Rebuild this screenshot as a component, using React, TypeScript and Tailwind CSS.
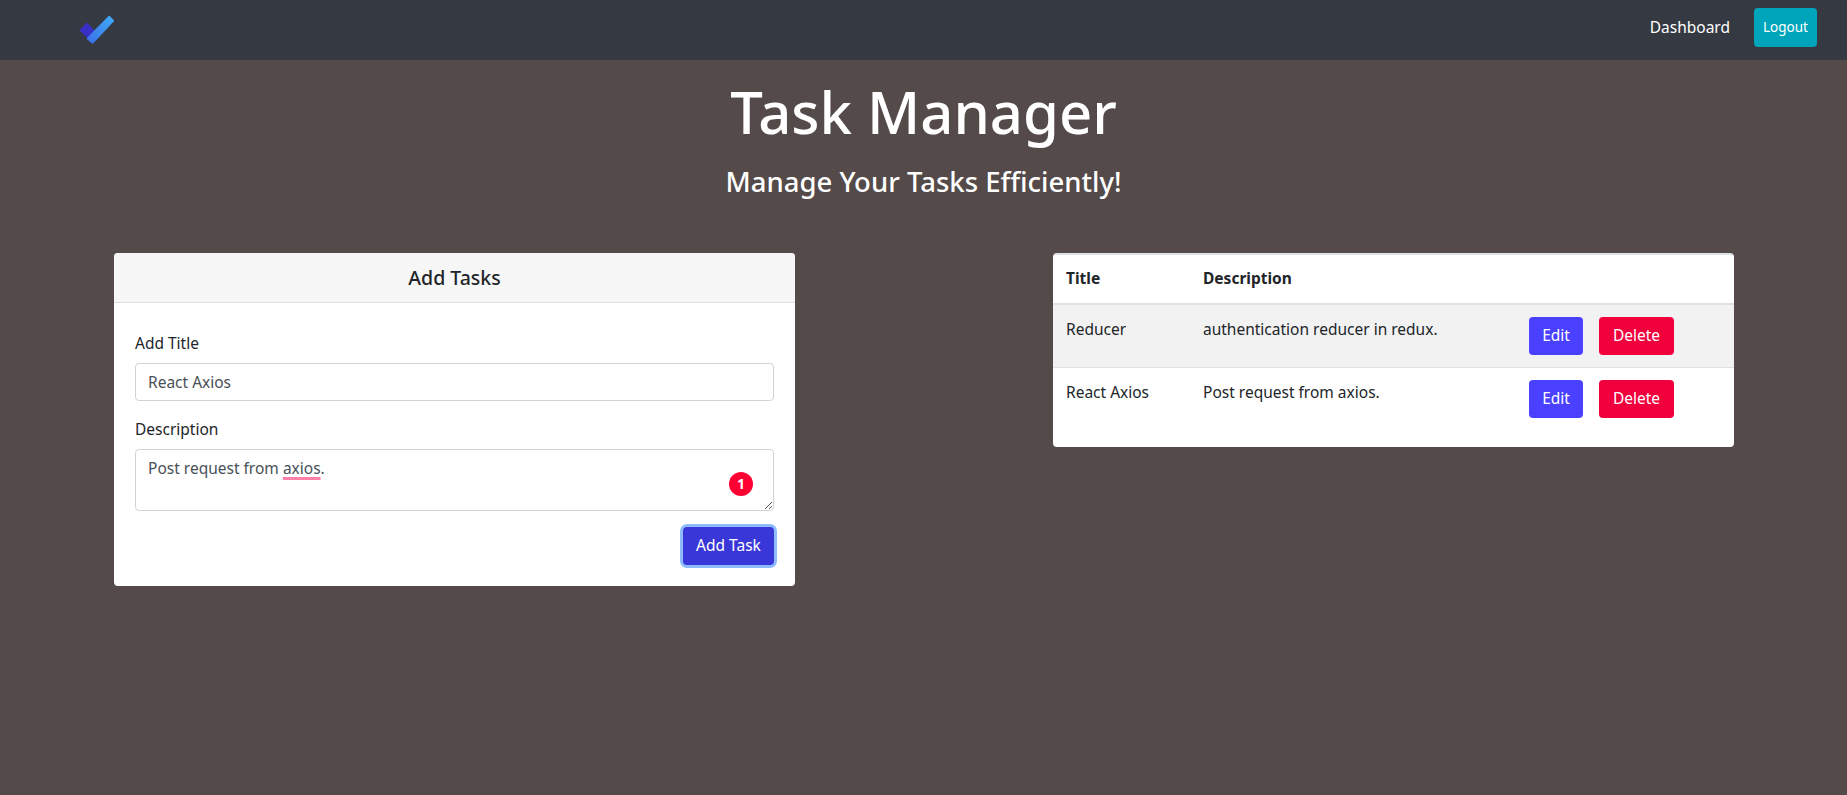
const font = "font-['Noto_Sans',sans-serif]";

function Logo() {
  return (
    <svg className="mt-[6px]" width="40" height="34" viewBox="0 0 40 34" fill="none">
      <defs>
        <linearGradient id="tick" x1="10" y1="30" x2="36" y2="4" gradientUnits="userSpaceOnUse">
          <stop offset="0" stopColor="#3a6fe6" />
          <stop offset="1" stopColor="#40aaf8" />
        </linearGradient>
      </defs>
      <path d="M2 15.5 8.2 9.2a1 1 0 0 1 1.4 0L19 19l-7 7.5L2 16.9a1 1 0 0 1 0-1.4Z" fill="#3a2fc4" />
      <path d="M9.2 23.7 30.3 2.2a1.2 1.2 0 0 1 1.7 0l3.7 3.7a1.2 1.2 0 0 1 0 1.7L15.4 29.2a1.2 1.2 0 0 1-1.7 0L9.2 25.4a1.2 1.2 0 0 1 0-1.7Z" fill="url(#tick)" />
    </svg>
  );
}

const tasks = [
  { title: "Reducer", description: "authentication reducer in redux." },
  { title: "React Axios", description: "Post request from axios." },
];

function AddTaskCard() {
  return (
    <div className="w-[681px] h-[333px] bg-white rounded-[4px] overflow-hidden text-[#212529]">
      <div className="h-[50px] bg-[#f7f7f7] border-b border-[#dcdde0] flex items-center justify-center text-[19.5px] font-medium">
        Add Tasks
      </div>
      <div className="px-[21px] pt-[28px]">
        <div className="h-[24px] leading-[24px] mb-[8px]">Add Title</div>
        <div className="h-[38px] border border-[#ced4da] rounded-[4px] px-[12px] leading-[36px] text-[#495057]">
          React Axios
        </div>
        <div className="h-[24px] leading-[24px] mt-[16px] mb-[8px]">Description</div>
        <div className="relative h-[62px] border border-[#ced4da] rounded-[4px] px-[12px] py-[6px] leading-[24px] text-[#495057]">
          Post request from{" "}
          <span className="underline decoration-[#ff80a8] decoration-[3px] underline-offset-[3px] [text-decoration-skip-ink:none]">
            axios
          </span>
          .
          <span className="absolute left-[593px] top-[22px] w-[24px] h-[24px] rounded-full bg-[#ff0033] text-white text-[14px] font-bold leading-[24px] text-center">
            1
          </span>
          <svg className="absolute right-0 bottom-0" width="10" height="10" viewBox="0 0 10 10" stroke="#555" strokeWidth="1">
            <path d="M2 9 9 2M6 9l3-3" />
          </svg>
        </div>
        <div className="flex justify-end mt-[16px]">
          <button className="w-[91px] h-[38px] rounded-[4px] bg-[#3a37d8] text-white ring-[3px] ring-[#8fbcff]">
            Add Task
          </button>
        </div>
      </div>
    </div>
  );
}

function TaskTable() {
  return (
    <div className="w-[681px] h-[194px] bg-white rounded-[4px] overflow-hidden text-[#212529] border-t-2 border-[#dee2e6]">
      <div className="flex h-[50px] items-center border-b-2 border-[#dee2e6] font-bold">
        <div className="w-[150px] pl-[13px]">Title</div>
        <div>Description</div>
      </div>
      {tasks.map((task, index) => (
        <div
          key={task.title}
          className={`flex h-[63px] border-b border-[#dee2e6] last:border-b-0 pt-[12px] ${index === 0 ? "bg-[#f2f2f2]" : ""}`}
        >
          <div className="w-[150px] pl-[13px] leading-[24px]">{task.title}</div>
          <div className="w-[326px] leading-[24px] whitespace-nowrap">{task.description}</div>
          <div className="flex gap-[16px]">
            <button className="w-[54px] h-[38px] rounded-[4px] bg-[#4a40ff] text-white">Edit</button>
            <button className="w-[75px] h-[38px] rounded-[4px] bg-[#f0003c] text-white">Delete</button>
          </div>
        </div>
      ))}
    </div>
  );
}

export default function App() {
  return (
    <div className={`min-h-[795px] bg-[#544a4a] text-[15.5px] ${font}`}>
      <nav className="h-[60px] bg-[#353a42] flex items-start justify-between pl-[78px] pr-[30px] pt-[8px]">
        <Logo />
        <div className="flex items-center gap-[24px]">
          <span className="text-white">Dashboard</span>
          <button className="w-[63px] h-[39px] rounded-[4px] bg-[#00a5bb] text-white text-[13.5px]">Logout</button>
        </div>
      </nav>
      <header className="text-center text-white pt-[13px]">
        <h1 className="text-[58px] leading-[77px] font-medium">Task Manager</h1>
        <h2 className="text-[27.5px] leading-[34px] font-medium mt-[15px]">Manage Your Tasks Efficiently!</h2>
      </header>
      <main className="w-[1620px] ml-[114px] flex justify-between items-start mt-[54px]">
        <AddTaskCard />
        <TaskTable />
      </main>
    </div>
  );
}
